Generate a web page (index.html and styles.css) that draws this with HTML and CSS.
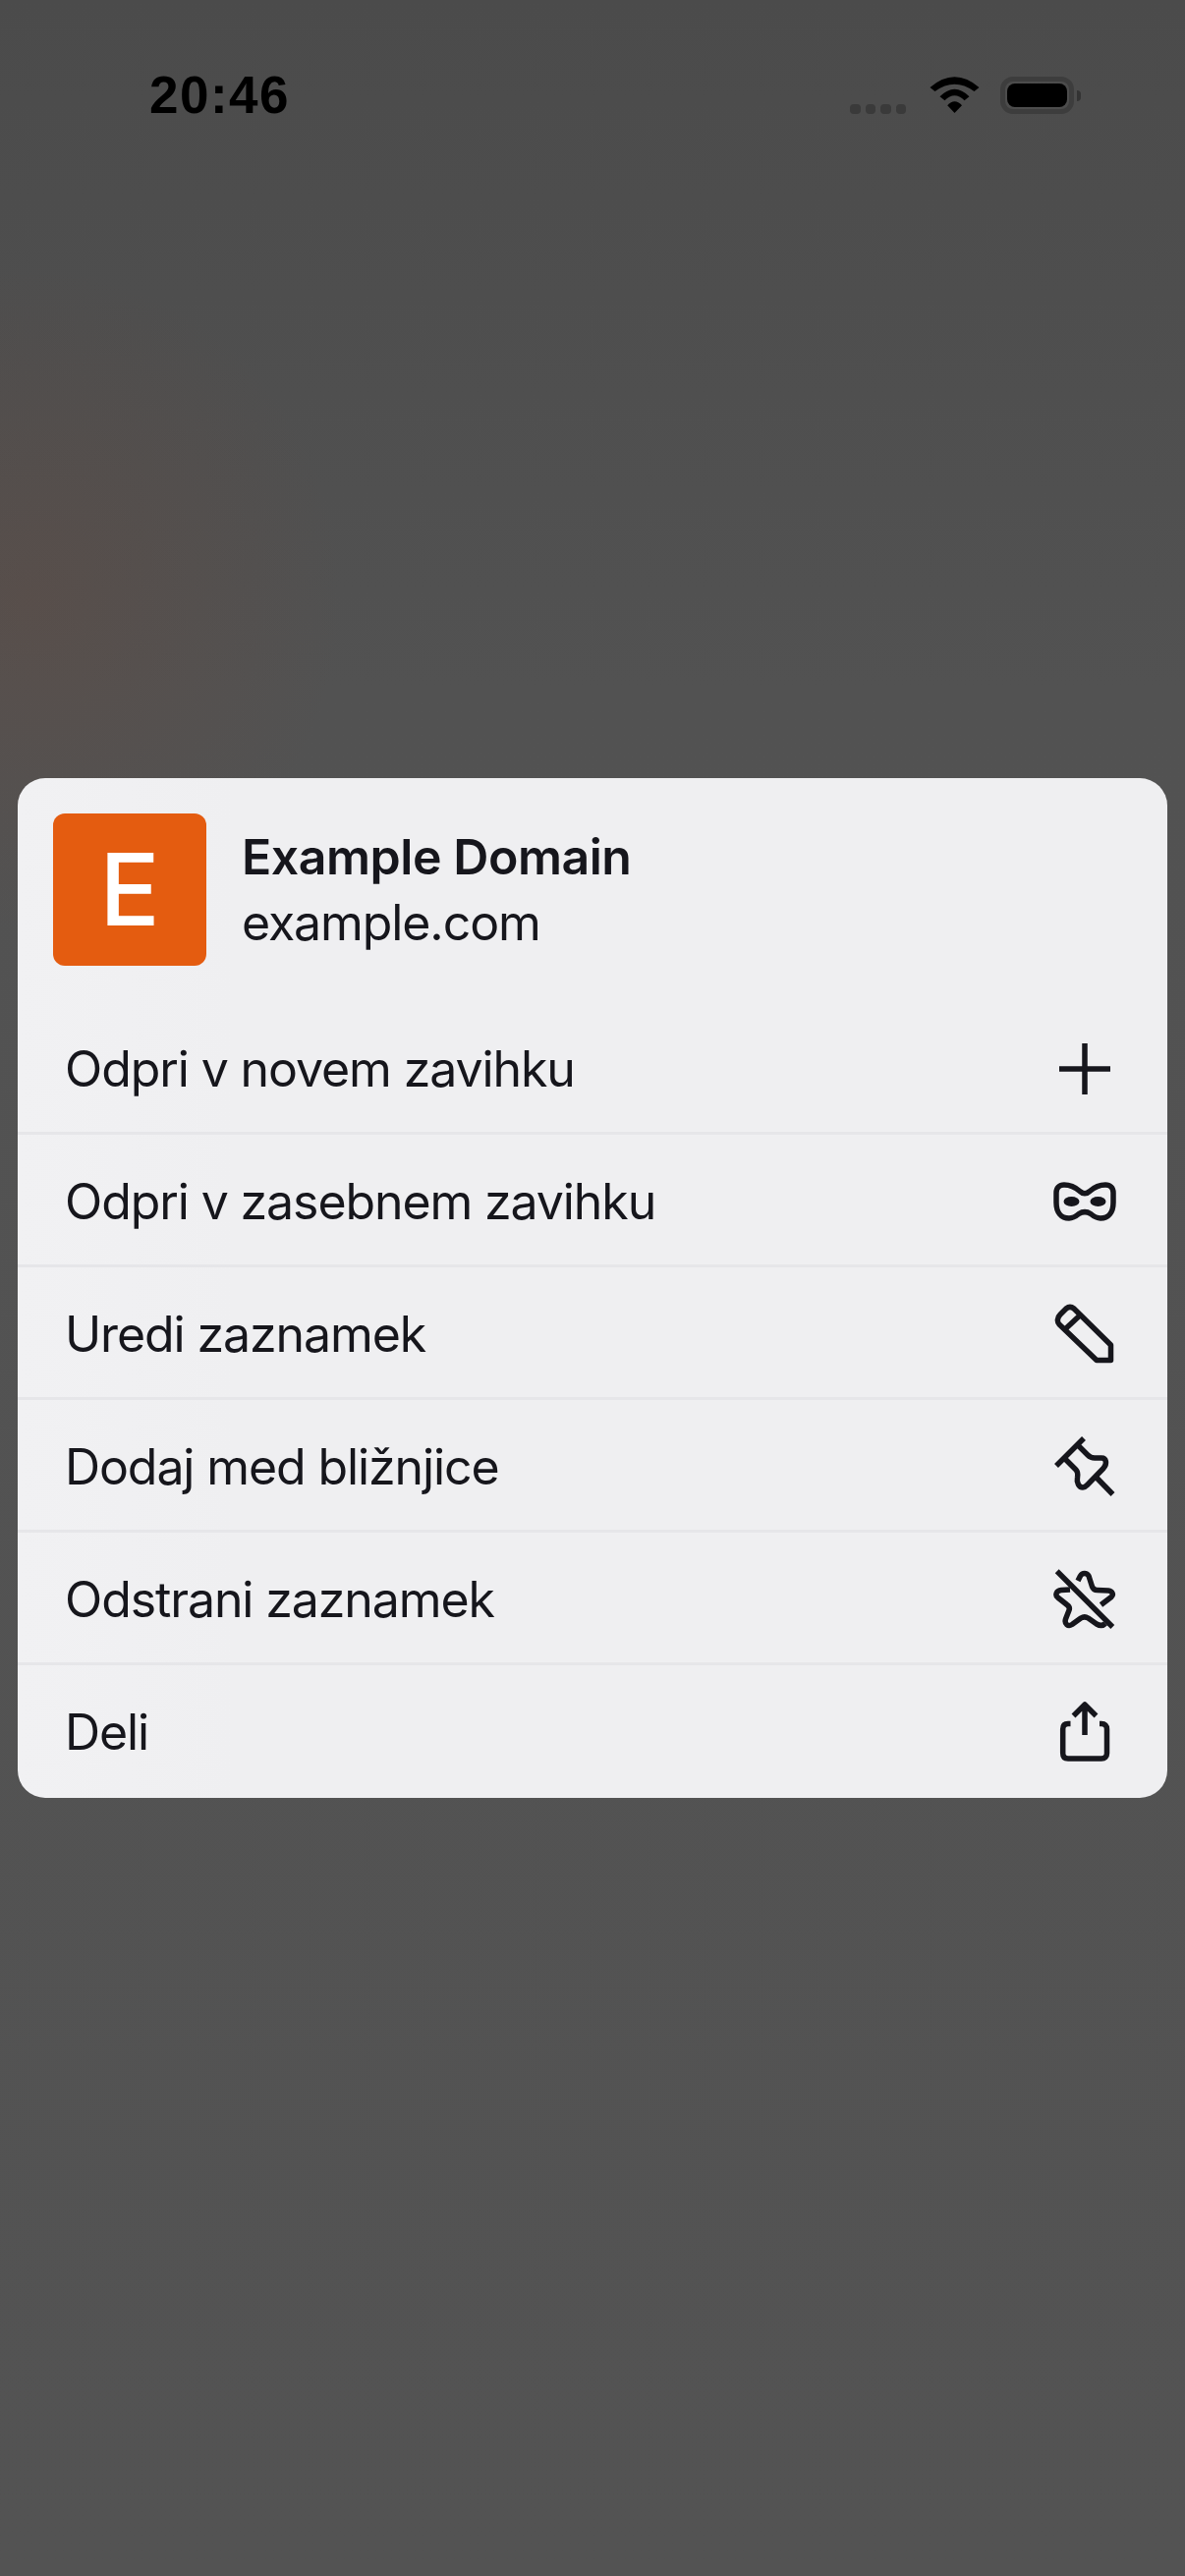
FILE: index.html
```html
<!DOCTYPE html>
<html lang="sl">
<head>
    <meta charset="UTF-8">
    <meta name="viewport" content="width=device-width, initial-scale=1.0">
    <title>Example Domain</title>
    <link rel="stylesheet" href="styles.css">
</head>
<body>
    <div class="status-bar">
        <div class="clock">20:46</div>
        <div class="status-icons">
            <div class="signal"><span></span><span></span><span></span><span></span></div>
            <svg class="wifi" width="52" height="38" viewBox="0 0 52 38">
                <path d="M0.500 11 Q25.500 -10.400 50.500 11 L45.500 15 Q25.500 0.400 5.500 15 Z"/>
                <path d="M10.500 20.300 Q25.500 5.100 40.500 20.300 L35.500 24.300 Q25.500 14.300 15.500 24.300 Z"/>
                <path d="M18.200 29.300 Q25.500 21.300 33 29.300 L25.500 37 Z"/>
            </svg>
            <div class="battery"><div class="battery-fill"></div></div>
            <div class="battery-nub"></div>
        </div>
    </div>

    <div class="spacer"></div>

    <div class="sheet">
        <div class="sheet-header">
            <div class="site-tile">E</div>
            <div class="site-info">
                <div class="site-title">Example Domain</div>
                <div class="site-url">example.com</div>
            </div>
        </div>

        <div class="menu-row">
            <span>Odpri v novem zavihku</span>
            <svg class="icon" viewBox="0 0 64 64"><path d="M32 6 V58 M6 32 H58"/></svg>
        </div>
        <div class="menu-row">
            <span>Odpri v zasebnem zavihku</span>
            <svg class="icon" viewBox="0 0 64 64">
                <path d="M11 15 C18 15 23 18 27 21.500 C30 24.500 34 24.500 37 21.500 C41 18 46 15 53 15 C58 15 61 18 61 23 V33 C61 43 56 49 48 49 C44 49 41 47 38 44.500 C34 42 30 42 26 44.500 C23 47 20 49 16 49 C8 49 3 43 3 33 V23 C3 18 6 15 11 15 Z"/>
                <ellipse class="solid" cx="18.500" cy="32" rx="8" ry="5"/>
                <ellipse class="solid" cx="45.500" cy="32" rx="8" ry="5"/>
            </svg>
        </div>
        <div class="menu-row">
            <span>Uredi zaznamek</span>
            <svg class="icon" viewBox="0 0 64 64">
                <path d="M7 12 L13 6 C15.500 4 18.500 4 21 6 L58.500 43 V58.500 H44 L6 22 C3.500 19.500 4 15 7 12 Z"/>
                <path d="M13 26 L28 12"/>
            </svg>
        </div>
        <div class="menu-row">
            <span>Dodaj med bližnjice</span>
            <svg class="icon" viewBox="0 0 64 64">
                <path d="M3 31 L31 3"/>
                <path d="M11 23 L23 35 C25 37 25 40 24.500 43 C23.500 48 26 53 30 53 C32 53 33 52 34.500 50.500 L51 33.500 C55 29 54 23 49 23 H42 C39 23 37 22 35 20 L25 10"/>
                <path d="M43 42 L60.500 60"/>
            </svg>
        </div>
        <div class="menu-row">
            <span>Odstrani zaznamek</span>
            <svg class="icon" viewBox="0 0 64 64">
                <path d="M3.700 3.300 L60.300 60"/>
                <path d="M25 13 L27.500 8 C29.500 4.500 34 4.500 36 8 L39.500 19 C40.500 21.500 42 22.500 44.500 22.500 L56 23 C60.500 23.500 61.500 27.500 59 29.500 L48.500 37.500"/>
                <path d="M17 22 L8 22.500 C3 23 1.500 27.500 4.500 30 L14 37.500 C16 39 17 40.500 16 43 L12.500 52 C11 57 15 60 19 57.500 L28 51 C30.500 49.500 33 49.500 35.500 51 L44 57 C47.500 59 50.500 59 53 56.500"/>
            </svg>
        </div>
        <div class="menu-row">
            <span>Deli</span>
            <svg class="icon" viewBox="0 0 64 64">
                <path d="M17.500 23.500 H15 C11.500 23.500 9.700 25.500 9.700 29 V53.500 C9.700 57 11.500 59 15 59 H49 C52.500 59 54.500 57 54.500 53.500 V29 C54.500 25.500 52.500 23.500 49 23.500 H47"/>
                <path d="M32 35 V5 M20.500 15.500 L32 4 L43.500 15.500"/>
            </svg>
        </div>
    </div>
</body>
</html>
```

FILE: styles.css
```css
* {
    box-sizing: border-box;
}

body {
    margin: 0;
    width: 1206px;
    height: 2622px;
    overflow: hidden;
    font-family: Inter, "Noto Sans", sans-serif;
    color: #16161c;
    background-color: #525252;
    background-image:
        radial-gradient(ellipse 320px 340px at 30px 610px, rgba(110, 70, 55, 0.24), rgba(110, 70, 55, 0)),
        linear-gradient(to bottom, #4b4b4b 0, #525252 700px, #535353 2622px);
    display: flex;
    flex-direction: column;
}

.status-bar {
    height: 196px;
    padding: 71px 106px 0 152px;
    display: flex;
    justify-content: space-between;
    align-items: flex-start;
}

.clock {
    font-family: "Liberation Sans", Arial, sans-serif;
    font-weight: 700;
    font-size: 53px;
    line-height: 52px;
    letter-spacing: 1.500px;
    color: #000;
}

.status-icons {
    display: flex;
    align-items: center;
    height: 38px;
    margin-top: 7px;
}

.signal {
    display: flex;
    gap: 5px;
    align-self: flex-end;
    margin-right: 24px;
}

.signal span {
    width: 10.500px;
    height: 10px;
    border-radius: 4px;
    background-color: #3a3a3a;
}

.wifi {
    margin-right: 20px;
    fill: #000;
}

.battery {
    width: 75px;
    height: 38px;
    padding: 2px;
    border: 5px solid #3d3d3d;
    border-radius: 13px;
}

.battery-fill {
    width: 100%;
    height: 100%;
    border-radius: 8px;
    background-color: #000;
}

.battery-nub {
    width: 4px;
    height: 11px;
    margin-left: 3px;
    border-radius: 0 5px 5px 0;
    background-color: #333;
}

.spacer {
    height: 596px;
}

.sheet {
    width: 1170px;
    height: 1038px;
    margin-left: 18px;
    background-color: #efeff1;
    background-image: linear-gradient(to right, #f1f1f3, #efeff1 220px);
    border-radius: 28px;
    overflow: hidden;
}

.sheet-header {
    height: 228px;
    padding: 36px 0 0 36px;
    display: flex;
    align-items: flex-start;
}

.site-tile {
    width: 156px;
    height: 155px;
    border-radius: 12px;
    background-color: #e45c10;
    color: #fff;
    font-size: 102px;
    font-weight: 500;
    line-height: 155px;
    text-align: center;
}

.site-info {
    margin-left: 36px;
    padding-top: 16px;
}

.site-title {
    font-size: 50px;
    font-weight: 600;
    line-height: 56px;
    letter-spacing: -0.450px;
}

.site-url {
    font-size: 50px;
    line-height: 56px;
    margin-top: 11px;
    letter-spacing: -1.100px;
}

.menu-row {
    height: 135px;
    padding: 4px 52px 0 48px;
    display: flex;
    justify-content: space-between;
    align-items: center;
    font-size: 50px;
    letter-spacing: -1.100px;
    border-bottom: 3px solid #e6e6e9;
}

.menu-row:last-child {
    border-bottom-color: transparent;
}

.icon {
    width: 64px;
    height: 64px;
    fill: none;
    stroke: #16161c;
    stroke-width: 5.500;
    stroke-linejoin: round;
}

.icon .solid {
    fill: #16161c;
    stroke: none;
}
```
